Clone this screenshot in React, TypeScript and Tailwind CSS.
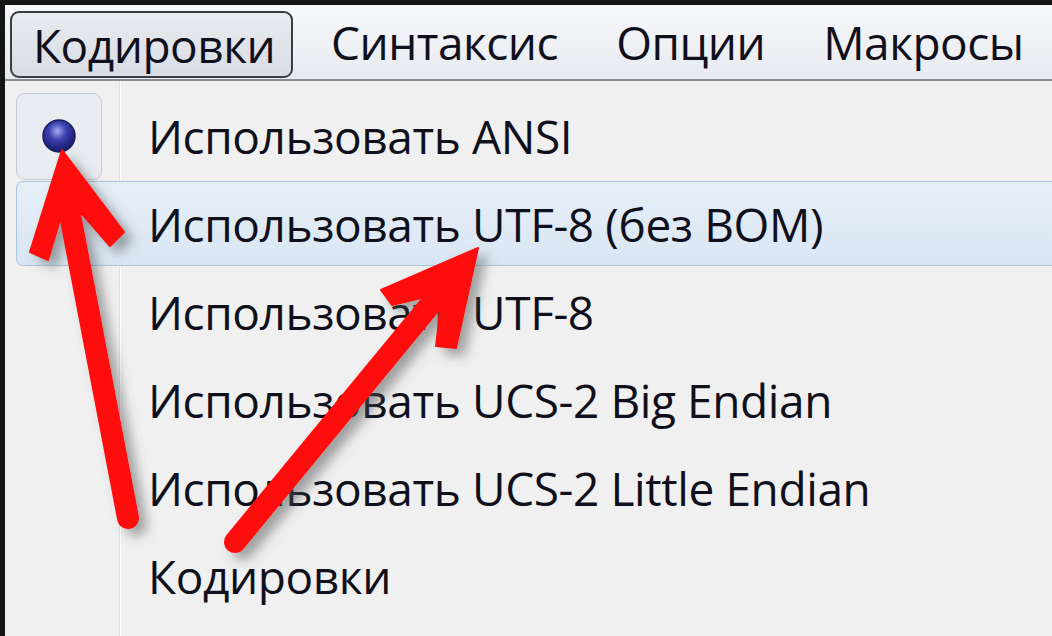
import React from 'react';

const items = [
  { label: 'Использовать ANSI', checked: true },
  { label: 'Использовать UTF-8 (без BOM)', active: true },
  { label: 'Использовать UTF-8' },
  { label: 'Использовать UCS-2 Big Endian' },
  { label: 'Использовать UCS-2 Little Endian' },
  { label: 'Кодировки' },
];

const Arrows: React.FC = () => (
  <svg className="absolute inset-0 pointer-events-none" width="1052" height="636" viewBox="0 0 1052 636">
    <defs>
      <filter id="shadow" x="-20%" y="-20%" width="140%" height="140%">
        <feDropShadow dx="8" dy="7" stdDeviation="6" floodColor="#505050" floodOpacity="0.5" />
      </filter>
    </defs>
    <g filter="url(#shadow)" fill="#ff0a0a" stroke="#ff0a0a">
      {/* left arrow, points to the radio dot */}
      <line x1="71" y1="220" x2="128" y2="518" strokeWidth="22" strokeLinecap="round" />
      <polygon points="62,150 124,232 110,246 82,214 60,220 48,260 30,252" strokeWidth="2" strokeLinejoin="round" />
      {/* right arrow, points to UTF-8 */}
      <line x1="430" y1="305" x2="235" y2="542" strokeWidth="22" strokeLinecap="round" />
      <polygon points="478,248 456,348 436,346 440,312 421,298 392,305 381,290" strokeWidth="2" strokeLinejoin="round" />
    </g>
  </svg>
);

export default function App() {
  return (
    <div className="relative w-[1052px] h-[636px] overflow-hidden bg-[#151515] pt-[5px] pl-[5px] font-['Open_Sans',sans-serif] text-[#10101c]">
      <div className="flex flex-col h-full">
        {/* menu bar */}
        <div className="h-[76px] flex items-center border-b-2 border-[#8a8d92] bg-gradient-to-b from-[#f7f8fa] to-[#e7eaef] text-[46px] leading-none tracking-[-0.5px]">
          <div className="ml-[5px] mt-[5px] h-[67px] w-[283px] flex items-center pl-[21px] rounded-[9px] border-2 border-[#3a3d42] bg-gradient-to-b from-[#e9ecf0] to-[#d8dde4]">
            Кодировки
          </div>
          <span className="ml-[38px]">Синтаксис</span>
          <span className="ml-[58px]">Опции</span>
          <span className="ml-[58px]">Макросы</span>
        </div>

        {/* dropdown */}
        <div className="relative flex-1 bg-[#f0f0f0] pt-[11px] pl-[11px]">
          <div className="absolute top-0 bottom-0 left-[114px] w-[2px] bg-[#e0e0e0] border-r border-white" />
          {items.map((it) => (
            <div key={it.label} className="relative h-[88px] flex items-center">
              {it.active && (
                <div className="absolute left-0 right-[-20px] top-px bottom-[2px] rounded-l-[7px] border border-[#a9c6e0] bg-gradient-to-b from-[#e6eff8] to-[#d9e6f2]" />
              )}
              {it.checked ? (
                <div className="relative w-[86px] h-[87px] flex items-center justify-center rounded-[9px] border border-[#c5ccd5] bg-[#e9edf1]">
                  <svg width="36" height="36" viewBox="0 0 36 36">
                    <defs>
                      <radialGradient id="dot" cx="45%" cy="35%" r="60%">
                        <stop offset="0%" stopColor="#a9acef" />
                        <stop offset="45%" stopColor="#3c42b0" />
                        <stop offset="100%" stopColor="#1a1d6e" />
                      </radialGradient>
                    </defs>
                    <circle cx="18" cy="18" r="16" fill="url(#dot)" stroke="#1b1e5c" strokeWidth="1.5" />
                  </svg>
                </div>
              ) : (
                <div className="w-[86px]" />
              )}
              <span className="relative ml-[46px] text-[46px] leading-none tracking-[-0.4px] whitespace-nowrap">
                {it.label}
              </span>
            </div>
          ))}
        </div>
      </div>
      <Arrows />
    </div>
  );
}
